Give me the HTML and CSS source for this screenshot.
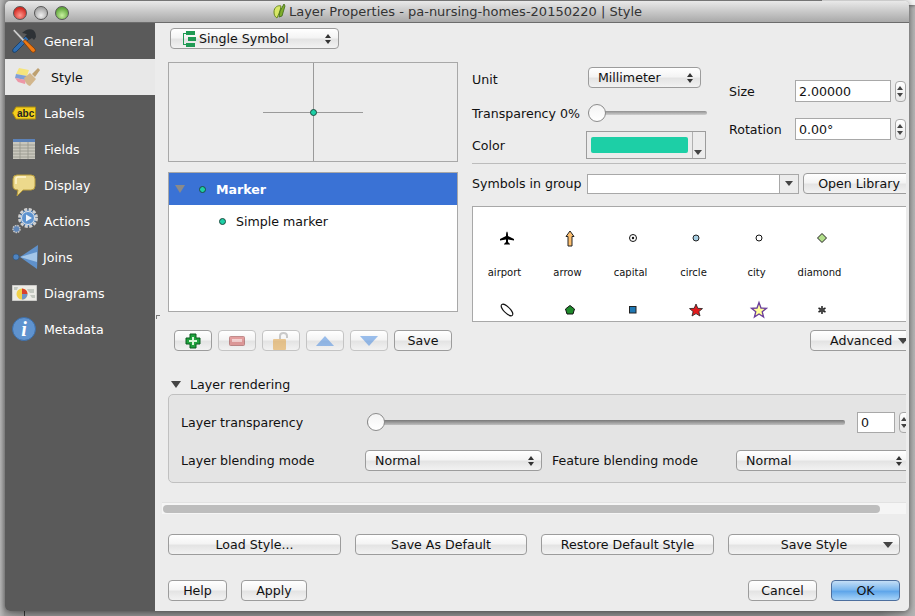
FILE: index.html
```html
<!DOCTYPE html>
<html lang="en">
<head>
    <meta charset="UTF-8">
    <meta name="viewport" content="width=device-width, initial-scale=1.0">
    <title>Layer Properties</title>
    <link rel="stylesheet" href="styles.css">
</head>
<body>
    <div class="desk-menu"></div>
    <div class="desk-line"></div>

    <div class="window">
        <div class="titlebar">
            <div class="lights">
                <span class="light red"></span>
                <span class="light grey"></span>
                <span class="light green"></span>
            </div>
            <svg class="title-icon" width="14" height="17" viewBox="0 0 14 17">
                <path d="M2 9C2 4 6 2 9 3L8 8L5 15C3 14 2 12 2 9Z" fill="#d8e868" stroke="#6a8a20"/>
                <path d="M8 8L12 1L13 3L10 13L7 14Z" fill="#7fae2c" stroke="#3e6a14" stroke-width=".8"/>
            </svg>
            <span>Layer Properties - pa-nursing-homes-20150220 | Style</span>
        </div>

        <div class="body">
            <div class="sidebar">
                <div class="nav-item">
                    <svg class="nav-icon" width="24" height="24" viewBox="0 0 24 24">
                        <path d="M1 23Q0 21 1.500 19.500L14 7L17 10L4.500 22.500Q3 24 1 23Z" fill="#2f6db0" stroke="#10345c" stroke-width=".7"/>
                        <path d="M1 1.500L2.500 0.500L12.500 11L11 12.500Z" fill="#d4d4d4" stroke="#6c6c6c" stroke-width=".5"/>
                        <path d="M11 12.500L13 10.500L23 20Q24 22 22.500 23Q21 24 19.500 22.500Z" fill="#f07a14" stroke="#7a3400" stroke-width=".7"/>
                        <path d="M10 4Q15 -1 20 0.500Q24 2 24 8L22 11L20 9L17 11L13 7L15 5.500Q13 4 10 4Z" fill="#2e3236"/>
                    </svg>
                    <span>General</span>
                </div>
                <div class="nav-item active">
                    <svg class="nav-icon style-icon" width="26" height="20" viewBox="0 0 26 20">
                        <path d="M1 7L4 1L14 3L12 9Z" fill="#f5e47c"/>
                        <path d="M0 11L1 7L12 9L11 13Z" fill="#7f9fd8"/>
                        <path d="M0 11L11 13L10 17L3 15Z" fill="#ee8296" opacity=".8"/>
                        <path d="M9 11L15 6L21 12L15 19Q11 18 9 11Z" fill="#d2b68c"/>
                        <path d="M17 7L23 1L25 3L20 10Z" fill="#bea070"/>
                    </svg>
                    <span>Style</span>
                </div>
                <div class="nav-item">
                    <svg class="nav-icon" width="24" height="14" viewBox="0 0 24 14">
                        <path d="M0.5 7L4 1H23.5V13H4Z" fill="#f4cf1c" stroke="#a88a10"/>
                        <text x="5" y="11" class="abc">abc</text>
                    </svg>
                    <span>Labels</span>
                </div>
                <div class="nav-item">
                    <svg class="nav-icon" width="24" height="20" viewBox="0 0 24 20">
                        <rect x="1" y="0" width="22" height="20" fill="#c9c7bd"/>
                        <rect x="1" y="0" width="22" height="3" fill="#5c82b8"/>
                        <path d="M1 6H23M1 9H23M1 12H23M1 15H23M1 18H23M8 3V20M16 3V20" stroke="#96958c" stroke-width=".8"/>
                    </svg>
                    <span>Fields</span>
                </div>
                <div class="nav-item">
                    <svg class="nav-icon" width="24" height="23" viewBox="0 0 24 23">
                        <path d="M5 1H19Q23 1 23 5V12Q23 16 19 16H11L5 22L6 16Q1 16 1 12V5Q1 1 5 1Z" fill="#ecd98c" stroke="#b89c3c"/>
                        <path d="M4 10V5Q4 3 6 3H14" fill="none" stroke="#fff6d0" stroke-width="1.5"/>
                    </svg>
                    <span>Display</span>
                </div>
                <div class="nav-item">
                    <svg class="nav-icon" width="26" height="26" viewBox="0 0 26 26">
                        <circle cx="16" cy="10" r="8.500" fill="#3f78b8" stroke="#d0d0d0" stroke-width="3" stroke-dasharray="3 1.500"/>
                        <circle cx="16" cy="10" r="6.500" fill="#5d93d0" stroke="#e8e8e8"/>
                        <path d="M14 6.500L20 10L14 13.500Z" fill="#eef4fb"/>
                        <circle cx="4.500" cy="21" r="3.500" fill="#5f86b8" stroke="#c0c0c0" stroke-width="1.600" stroke-dasharray="1.600 .8"/>
                    </svg>
                    <span>Actions</span>
                </div>
                <div class="nav-item joins">
                    <svg class="nav-icon" width="28" height="24" viewBox="0 0 28 24">
                        <path d="M8 12L26 0L25 24Z" fill="#5f91cb"/>
                        <path d="M8 12L25 7V17Z" fill="#a4c6e8"/>
                        <path d="M3 12H9" stroke="#3b6aa0"/>
                        <circle cx="4" cy="12" r="3" fill="#4f84c0" stroke="#2c527e" stroke-width=".6"/>
                    </svg>
                    <span>Joins</span>
                </div>
                <div class="nav-item">
                    <svg class="nav-icon" width="25" height="16" viewBox="0 0 25 16">
                        <rect x="0" y="0" width="25" height="16" fill="#ecebe6" stroke="#aaa"/>
                        <path d="M15 4H22V8H18L16 6ZM2 2H6L5 5H2ZM18 10H23V13H20Z" fill="#c3c8c0"/>
                        <circle cx="10" cy="9" r="5.500" fill="#f2d24a"/>
                        <path d="M10 9V3.500A5.500 5.500 0 0 1 15.500 9Z" fill="#d8412e"/>
                        <path d="M10 9H15.500A5.500 5.500 0 0 1 10 14.500Z" fill="#6f93c8"/>
                    </svg>
                    <span>Diagrams</span>
                </div>
                <div class="nav-item">
                    <svg class="nav-icon" width="24" height="24" viewBox="0 0 24 24">
                        <circle cx="12" cy="12" r="11.500" fill="#5f93cf" stroke="#3d6ea8"/>
                        <text x="12" y="19" class="info-i">i</text>
                    </svg>
                    <span>Metadata</span>
                </div>
            </div>

            <div class="main">
                <div class="scroll-area">
                    <button class="btn select render-select">
                        <svg class="tree-icon" width="13" height="16" viewBox="0 0 13 16">
                            <path d="M3 0H12V4H3ZM5 6H13V10H5ZM3 12H12V16H3ZM0 2H3V3H1V13H3V14H0Z" fill="#1f9a54"/>
                        </svg>
                        <span class="select-text">Single Symbol</span>
                        <span class="updown"></span>
                    </button>

                    <div class="columns">
                        <div class="left-col">
                            <div class="preview">
                                <div class="cross-v"></div>
                                <div class="cross-h"></div>
                                <div class="dot preview-dot"></div>
                            </div>
                            <div class="tree">
                                <div class="tree-row selected">
                                    <span class="tree-arrow"></span>
                                    <span class="dot"></span>
                                    <b>Marker</b>
                                </div>
                                <div class="tree-row child">
                                    <span class="dot"></span>
                                    <span>Simple marker</span>
                                </div>
                            </div>
                            <div class="tool-row">
                                <button class="btn tool">
                                    <svg width="16" height="16" viewBox="0 0 16 16"><path d="M5 1H11V5H15V11H11V15H5V11H1V5H5Z" fill="#1fa23c" stroke="#0d5c20"/><path d="M7 4H9V7H12V9H9V12H7V9H4V7H7Z" fill="#d8f5d8"/></svg>
                                </button>
                                <button class="btn tool off">
                                    <svg width="16" height="10" viewBox="0 0 16 10"><rect x=".5" y=".5" width="15" height="9" rx="1" fill="#d04848" stroke="#8a2020"/><rect x="3" y="3" width="10" height="3" fill="#f4b0b0"/></svg>
                                </button>
                                <button class="btn tool off">
                                    <svg width="16" height="18" viewBox="0 0 16 18"><path d="M7 8V4Q7 1 10.500 1Q14 1 14 4V6" fill="none" stroke="#999" stroke-width="2"/><rect x="0" y="7" width="13" height="11" rx="1" fill="#e09a30"/></svg>
                                </button>
                                <button class="btn tool off">
                                    <svg width="18" height="10" viewBox="0 0 18 10"><path d="M9 0L18 10H0Z" fill="#3d84e0"/></svg>
                                </button>
                                <button class="btn tool off">
                                    <svg width="18" height="10" viewBox="0 0 18 10"><path d="M0 0H18L9 10Z" fill="#3d84e0"/></svg>
                                </button>
                                <button class="btn tool-save">Save</button>
                            </div>
                        </div>

                        <div class="right-col">
                            <div class="sym-top">
                                <div class="sym-left">
                                    <div class="sym-row unit-row">
                                        <label class="sym-label">Unit</label>
                                        <button class="btn select unit-select">
                                            <span class="select-text">Millimeter</span>
                                            <span class="updown"></span>
                                        </button>
                                    </div>
                                    <div class="sym-row trans-row">
                                        <label class="sym-label">Transparency 0%</label>
                                        <div class="slider small"><span class="knob"></span></div>
                                    </div>
                                    <div class="sym-row color-row">
                                        <label class="sym-label color-label">Color</label>
                                        <div class="color-btn">
                                            <span class="swatch"></span>
                                            <span class="color-drop"><i class="tri-down small-tri"></i></span>
                                        </div>
                                    </div>
                                </div>
                                <div class="sym-right">
                                    <div class="size-row">
                                        <label class="size-label">Size</label>
                                        <input class="field size-field" type="text" value="2.00000">
                                        <span class="spinner"></span>
                                    </div>
                                    <div class="size-row rotation-row">
                                        <label class="size-label">Rotation</label>
                                        <input class="field size-field" type="text" value="0.00°">
                                        <span class="spinner"></span>
                                    </div>
                                </div>
                            </div>
                            <div class="hr"></div>
                            <div class="group-row">
                                <label class="group-label">Symbols in group</label>
                                <div class="combo">
                                    <span class="combo-input"></span>
                                    <span class="combo-drop"><i class="tri-down small-tri"></i></span>
                                </div>
                                <button class="btn open-lib">Open Library</button>
                            </div>
                            <div class="symbol-list">
                                <div class="symbol">
                                    <svg width="24" height="24" viewBox="0 0 24 24"><path d="M14 5.500Q15 6 15 10L21 13V14.500L15 13.500V16L17 18V18.500H11V18L13 16V13.500L7 14.500V13L13 10Q13 6 14 5.500Z" fill="#000"/></svg>
                                    <span>airport</span>
                                </div>
                                <div class="symbol">
                                    <svg width="24" height="24" viewBox="0 0 24 24"><path d="M14 5L18 10.500H16V20H12V10.500H10Z" fill="#fdbf6f" stroke="#222"/></svg>
                                    <span>arrow</span>
                                </div>
                                <div class="symbol">
                                    <svg width="24" height="24" viewBox="0 0 24 24"><circle cx="14" cy="12" r="3.500" fill="#fff" stroke="#111"/><circle cx="14" cy="12" r="1.200" fill="#111"/></svg>
                                    <span>capital</span>
                                </div>
                                <div class="symbol">
                                    <svg width="24" height="24" viewBox="0 0 24 24"><circle cx="14" cy="12" r="3" fill="#a6cee3" stroke="#222"/></svg>
                                    <span>circle</span>
                                </div>
                                <div class="symbol">
                                    <svg width="24" height="24" viewBox="0 0 24 24"><circle cx="14" cy="12" r="3" fill="#fff" stroke="#111"/></svg>
                                    <span>city</span>
                                </div>
                                <div class="symbol">
                                    <svg width="24" height="24" viewBox="0 0 24 24"><path d="M14 7.500L18.500 12L14 16.500L9.500 12Z" fill="#b2df8a" stroke="#222"/></svg>
                                    <span>diamond</span>
                                </div>
                                <div class="symbol">
                                    <svg width="24" height="24" viewBox="0 0 24 24"><ellipse cx="14" cy="12" rx="7.500" ry="3" transform="rotate(45 14 12)" fill="#fff" stroke="#111"/></svg>
                                </div>
                                <div class="symbol">
                                    <svg width="24" height="24" viewBox="0 0 24 24"><path d="M14 7.500L18.500 11L17 16H11L9.500 11Z" fill="#1f8a2c" stroke="#111"/></svg>
                                </div>
                                <div class="symbol">
                                    <svg width="24" height="24" viewBox="0 0 24 24"><rect x="10.500" y="8.500" width="6.500" height="6.500" fill="#1f78b4" stroke="#222"/></svg>
                                </div>
                                <div class="symbol">
                                    <svg width="24" height="24" viewBox="0 0 24 24"><path d="M14 6L15.800 10.300L20.500 10.600L16.900 13.600L18 18L14 15.600L10 18L11.100 13.600L7.500 10.600L12.200 10.300Z" fill="#e31a1c" stroke="#222" stroke-width=".8"/></svg>
                                </div>
                                <div class="symbol">
                                    <svg width="24" height="24" viewBox="0 0 24 24"><path d="M14 4.500L16 10L21.500 10.300L17.200 13.700L18.600 19L14 16L9.400 19L10.800 13.700L6.500 10.300L12 10Z" fill="#ffff99" stroke="#6a3d9a" stroke-width="1.300"/></svg>
                                </div>
                                <div class="symbol">
                                    <svg width="24" height="24" viewBox="0 0 24 24"><path d="M14 8V16M10.500 10L17.500 14M10.500 14L17.500 10" stroke="#222" stroke-width="1.500"/><circle cx="14" cy="12" r="2.500" fill="#444"/></svg>
                                </div>
                            </div>
                            <div class="advanced-row">
                                <button class="btn advanced">Advanced<i class="tri-down"></i></button>
                            </div>
                        </div>
                    </div>

                    <div class="render-head">
                        <i class="tri-down big-tri"></i>
                        <span>Layer rendering</span>
                    </div>
                    <div class="render-box">
                        <div class="render-row">
                            <label class="render-label">Layer transparency</label>
                            <div class="slider wide"><span class="knob"></span></div>
                            <input class="field zero-field" type="text" value="0">
                            <span class="spinner"></span>
                        </div>
                        <div class="render-row blend-row">
                            <label class="render-label">Layer blending mode</label>
                            <button class="btn select blend-select">
                                <span class="select-text">Normal</span>
                                <span class="updown"></span>
                            </button>
                            <label class="render-label feature-label">Feature blending mode</label>
                            <button class="btn select feature-select">
                                <span class="select-text">Normal</span>
                                <span class="updown"></span>
                            </button>
                        </div>
                    </div>
                    <div class="splitter-grip"></div>
                </div>

                <div class="hscroll"><div class="hscroll-thumb"></div></div>

                <div class="style-buttons">
                    <button class="btn style-btn wide-a">Load Style...</button>
                    <button class="btn style-btn wide-b">Save As Default</button>
                    <button class="btn style-btn wide-a">Restore Default Style</button>
                    <button class="btn style-btn wide-b save-style">Save Style<i class="tri-down"></i></button>
                </div>

                <div class="dialog-buttons">
                    <div class="dialog-group">
                        <button class="btn help-btn">Help</button>
                        <button class="btn apply-btn">Apply</button>
                    </div>
                    <div class="dialog-group">
                        <button class="btn cancel-btn">Cancel</button>
                        <button class="btn ok-btn">OK</button>
                    </div>
                </div>
            </div>
        </div>
    </div>
</body>
</html>
```

FILE: styles.css
```css
body {
    margin: 0;
    width: 915px;
    height: 616px;
    overflow: hidden;
    position: relative;
    background: linear-gradient(to right, #b8b8b8 0, #a0a0a0 5px, #8c8c8c 30px, #8c8c8c 880px, #b4b4b4 915px);
    font-family: "DejaVu Sans", sans-serif;
    font-size: 12.6px;
    color: #111;
}

.desk-menu {
    position: absolute;
    left: 822px;
    top: 0;
    width: 93px;
    height: 5px;
    background: #f4f4f4;
    border-bottom-left-radius: 4px;
    box-shadow: 0 1px 3px rgba(0, 0, 0, 0.4);
}

.desk-line {
    position: absolute;
    left: 24px;
    top: 608px;
    width: 1px;
    height: 8px;
    background: #333;
}

.window {
    position: absolute;
    left: 5px;
    top: 1px;
    width: 904px;
    height: 610px;
    border-radius: 5px;
    overflow: hidden;
    box-shadow: 0 1px 6px rgba(0, 0, 0, 0.5);
    display: flex;
    flex-direction: column;
}

.titlebar {
    height: 21px;
    flex: none;
    position: relative;
    background: linear-gradient(#e9e9e9, #a9a9a9);
    border-bottom: 1px solid #6c6c6c;
    display: flex;
    align-items: center;
    justify-content: center;
    gap: 3px;
    color: #333;
    font-size: 13px;
}

.lights {
    position: absolute;
    left: 8px;
    top: 5px;
    display: flex;
    gap: 7px;
}

.light {
    width: 12px;
    height: 12px;
    border-radius: 50%;
    border: 0.5px solid #555;
}

.red { background: radial-gradient(circle at 50% 70%, #ff9a90, #d42a22 70%); }
.grey { background: radial-gradient(circle at 50% 70%, #f0f0f0, #a8a8a8 70%); }
.green { background: radial-gradient(circle at 50% 70%, #c8f0a0, #62a83c 70%); }

.body {
    flex: 1;
    display: flex;
    min-height: 0;
}

/* left nav */
.sidebar {
    width: 150px;
    flex: none;
    background: #5a5a5a;
}

.nav-item {
    height: 36px;
    display: flex;
    align-items: center;
    color: #fff;
    padding-left: 7px;
    position: relative;
}

.nav-item span {
    position: absolute;
    left: 39px;
    top: 11px;
}

.nav-item.active {
    background: #e8e8e8;
    color: #111;
}

.nav-item.active span {
    left: 46px;
}

.nav-item.joins span {
    left: 38px;
}

.nav-icon {
    display: block;
}

.style-icon {
    margin-left: 3px;
}

.abc {
    font-family: "Liberation Sans", sans-serif;
    font-weight: bold;
    font-size: 10px;
    fill: #222;
}

.info-i {
    font-family: "Liberation Serif", serif;
    font-style: italic;
    font-weight: bold;
    font-size: 20px;
    fill: #fff;
    text-anchor: middle;
}

/* main panel */
.main {
    flex: 1;
    background: #ececec;
    display: flex;
    flex-direction: column;
    min-width: 0;
}

.scroll-area {
    width: 751px;
    height: 479px;
    flex: none;
    overflow: hidden;
    padding-top: 5px;
    box-sizing: border-box;
    position: relative;
}

.btn {
    font-family: inherit;
    font-size: 12.6px;
    color: #111;
    height: 21px;
    padding: 0;
    border: 1px solid #9c9c9c;
    border-radius: 4px;
    background: linear-gradient(#ffffff, #f4f4f4 45%, #e4e4e4 55%, #f2f2f2);
    box-sizing: border-box;
    display: block;
    flex: none;
    white-space: nowrap;
}

.select {
    display: flex;
    align-items: center;
    position: relative;
    text-align: left;
}

.select-text {
    padding-left: 9px;
}

.updown {
    position: absolute;
    right: 7px;
    top: 5px;
    width: 0;
    height: 0;
    border-left: 3px solid transparent;
    border-right: 3px solid transparent;
    border-bottom: 4px solid #333;
}

.updown::after {
    content: "";
    position: absolute;
    left: -3px;
    top: 6px;
    border-left: 3px solid transparent;
    border-right: 3px solid transparent;
    border-top: 4px solid #333;
}

.render-select {
    width: 169px;
    margin-left: 15px;
}

.tree-icon {
    margin-left: 12px;
}

.render-select .select-text {
    padding-left: 3px;
}

.columns {
    display: flex;
    gap: 14px;
    margin-top: 13px;
    padding-left: 13px;
}

.left-col {
    width: 290px;
    flex: none;
}

.preview {
    height: 100px;
    border: 1px solid #a8a8a8;
    box-sizing: border-box;
    position: relative;
}

.cross-v {
    position: absolute;
    left: 144px;
    top: 0;
    bottom: 0;
    width: 1px;
    background: #9a9a9a;
}

.cross-h {
    position: absolute;
    left: 94px;
    top: 49px;
    width: 100px;
    height: 1px;
    background: #9a9a9a;
}

.dot {
    display: inline-block;
    width: 5px;
    height: 5px;
    border-radius: 50%;
    background: #1dcfa6;
    border: 1px solid #1d4a3e;
    flex: none;
}

.preview-dot {
    position: absolute;
    left: 141px;
    top: 46px;
}

.tree {
    height: 140px;
    margin-top: 10px;
    border: 1px solid #a8a8a8;
    background: #fff;
    box-sizing: border-box;
}

.tree-row {
    height: 32px;
    display: flex;
    align-items: center;
}

.tree-row.selected {
    background: #3a72d5;
    color: #fff;
}

.tree-arrow {
    width: 0;
    height: 0;
    margin-left: 6px;
    border-left: 5px solid transparent;
    border-right: 5px solid transparent;
    border-top: 8px solid #8a8a8a;
}

.tree-row.selected .dot {
    margin-left: 14px;
}

.tree-row.selected b {
    margin-left: 10px;
}

.tree-row.child .dot {
    margin-left: 50px;
}

.tree-row.child span:last-child {
    margin-left: 10px;
}

.tool-row {
    display: flex;
    gap: 6px;
    margin-top: 18px;
    padding-left: 6px;
}

.tool {
    width: 38px;
    display: flex;
    align-items: center;
    justify-content: center;
}

.tool.off {
    border-color: #c4c4c4;
}

.tool.off svg {
    opacity: 0.5;
}

.tool-save {
    width: 58px;
}

.right-col {
    width: 435px;
    flex: none;
}

.sym-top {
    display: flex;
    gap: 22px;
}

.sym-left {
    width: 235px;
    flex: none;
    padding-top: 5px;
}

.sym-right {
    width: 177px;
    flex: none;
}

.sym-row {
    display: flex;
    align-items: center;
}

.sym-label {
    width: 116px;
    flex: none;
    white-space: nowrap;
}

.unit-select {
    width: 113px;
}

.unit-row .sym-label {
    padding-top: 4px;
}

.trans-row {
    margin-top: 15px;
    height: 20px;
}

.slider {
    position: relative;
    height: 4px;
    border-radius: 2px;
    background: linear-gradient(#8f8f8f, #d0d0d0);
    flex: none;
}

.slider.small {
    width: 119px;
    margin-top: -1px;
}

.knob {
    position: absolute;
    left: 0;
    top: -7px;
    width: 16px;
    height: 16px;
    border-radius: 50%;
    background: linear-gradient(#f4f4f4, #ffffff);
    border: 1px solid #8c8c8c;
}

.color-row {
    margin-top: 8px;
}

.color-label {
    width: 114px;
    padding-top: 1px;
}

.color-btn {
    width: 120px;
    height: 28px;
    border: 1px solid #9c9c9c;
    box-sizing: border-box;
    display: flex;
    align-items: center;
    padding-left: 4px;
}

.swatch {
    width: 98px;
    height: 16px;
    border-radius: 2px;
    background: #1dcfa6;
}

.color-drop {
    margin-left: 4px;
    width: 12px;
    height: 26px;
    border-left: 1px solid #b0b0b0;
    position: relative;
}

.tri-down {
    display: inline-block;
    width: 0;
    height: 0;
    border-left: 5px solid transparent;
    border-right: 5px solid transparent;
    border-top: 6px solid #444;
}

.small-tri {
    border-left-width: 4px;
    border-right-width: 4px;
    border-top-width: 5px;
}

.color-drop .small-tri {
    position: absolute;
    left: 1px;
    bottom: 3px;
}

.size-row {
    display: flex;
    align-items: center;
    margin-top: 18px;
}

.rotation-row {
    margin-top: 16px;
}

.size-label {
    width: 66px;
    flex: none;
}

.field {
    font-family: inherit;
    font-size: 12.6px;
    color: #111;
    background: #fff;
    border: 1px solid #a8a8a8;
    box-sizing: border-box;
    padding: 0 3px;
    margin: 0;
    outline: none;
    flex: none;
}

.size-field {
    width: 96px;
    height: 22px;
}

.spinner {
    display: block;
    position: relative;
    width: 11px;
    height: 21px;
    margin-left: 4px;
    flex: none;
    box-sizing: border-box;
    border: 1px solid #a8a8a8;
    border-radius: 4px;
    background: linear-gradient(#fff, #e8e8e8);
}

.spinner::before,
.spinner::after {
    content: "";
    position: absolute;
    left: 1px;
    border-left: 3px solid transparent;
    border-right: 3px solid transparent;
}

.spinner::before {
    top: 4px;
    border-bottom: 4px solid #444;
}

.spinner::after {
    bottom: 4px;
    border-top: 4px solid #444;
}

.hr {
    height: 1px;
    background: #bcbcbc;
    margin-top: 4px;
}

.group-row {
    display: flex;
    align-items: center;
    margin-top: 9px;
    height: 21px;
}

.group-label {
    width: 115px;
    flex: none;
    white-space: nowrap;
}

.combo {
    width: 212px;
    height: 20px;
    display: flex;
    flex: none;
    border: 1px solid #a8a8a8;
    box-sizing: border-box;
    background: #fff;
}

.combo-input {
    flex: 1;
}

.combo-drop {
    width: 18px;
    flex: none;
    background: #ececec;
    border-left: 1px solid #a8a8a8;
    display: flex;
    align-items: center;
    justify-content: center;
}

.open-lib {
    width: 112px;
    margin-left: 4px;
}

.symbol-list {
    height: 116px;
    margin-top: 12px;
    border: 1px solid #a8a8a8;
    background: #fff;
    box-sizing: border-box;
    display: grid;
    grid-template-columns: repeat(6, 63px);
    grid-auto-rows: 72px;
    overflow: hidden;
}

.symbol {
    padding-top: 19px;
    box-sizing: border-box;
    text-align: center;
    font-size: 10px;
    line-height: 15px;
}

.symbol svg {
    display: block;
    margin: 0 auto 15px;
}

.advanced-row {
    margin-top: 8px;
    padding-left: 338px;
}

.advanced {
    width: 110px;
    text-align: left;
    padding-left: 19px;
}

.advanced .tri-down {
    margin-left: 6px;
    vertical-align: 1px;
}

.render-head {
    margin-top: 25px;
    height: 18px;
    padding: 0 0 2px 16px;
    box-sizing: border-box;
    display: flex;
    align-items: center;
    gap: 9px;
}

.big-tri {
    border-top-width: 7px;
}

.render-box {
    margin-left: 13px;
    width: 760px;
    height: 89px;
    border: 1px solid #c0c0c0;
    border-radius: 5px;
    background: #e4e4e4;
    box-sizing: border-box;
    padding: 17px 0 0 12px;
}

.render-row {
    display: flex;
    align-items: center;
    height: 21px;
}

.blend-row {
    margin-top: 17px;
}

.render-label {
    width: 184px;
    flex: none;
    white-space: nowrap;
}

.slider.wide {
    width: 478px;
    height: 5px;
    margin-left: 2px;
    background: linear-gradient(#787878, #c0c0c0);
}

.zero-field {
    width: 38px;
    height: 21px;
    margin-left: 12px;
}

.blend-select {
    width: 177px;
}

.feature-label {
    margin-left: 10px;
}

.feature-select {
    width: 200px;
}

.feature-select .updown {
    right: 33px;
}

.splitter-grip {
    position: absolute;
    left: 1px;
    top: 292px;
    width: 3px;
    height: 3px;
    border-top: 1px solid #777;
    border-left: 1px solid #777;
}

.hscroll {
    height: 12px;
    width: 744px;
    margin-left: 7px;
    flex: none;
    background: #f5f5f5;
    border-top: 1px solid #e2e2e2;
    box-sizing: border-box;
    padding-top: 2px;
}

.hscroll-thumb {
    width: 717px;
    height: 8px;
    margin-left: 1px;
    border-radius: 4px;
    background: #bdbdbd;
}

.style-buttons {
    display: flex;
    gap: 14px;
    margin-top: 20px;
    padding-left: 13px;
}

.wide-a {
    width: 173px;
}

.wide-b {
    width: 172px;
}

.save-style {
    position: relative;
}

.save-style .tri-down {
    position: absolute;
    right: 6px;
    top: 7px;
}

.dialog-buttons {
    display: flex;
    justify-content: space-between;
    width: 732px;
    margin-top: 25px;
    margin-left: 13px;
}

.dialog-group {
    display: flex;
    gap: 14px;
}

.help-btn { width: 59px; }
.apply-btn { width: 66px; }
.cancel-btn { width: 69px; }

.ok-btn {
    width: 69px;
    border-color: #4d6f9e;
    background: linear-gradient(#c4def6, #7db8ee 45%, #5fa6ea 55%, #a8d4f8);
}
```
